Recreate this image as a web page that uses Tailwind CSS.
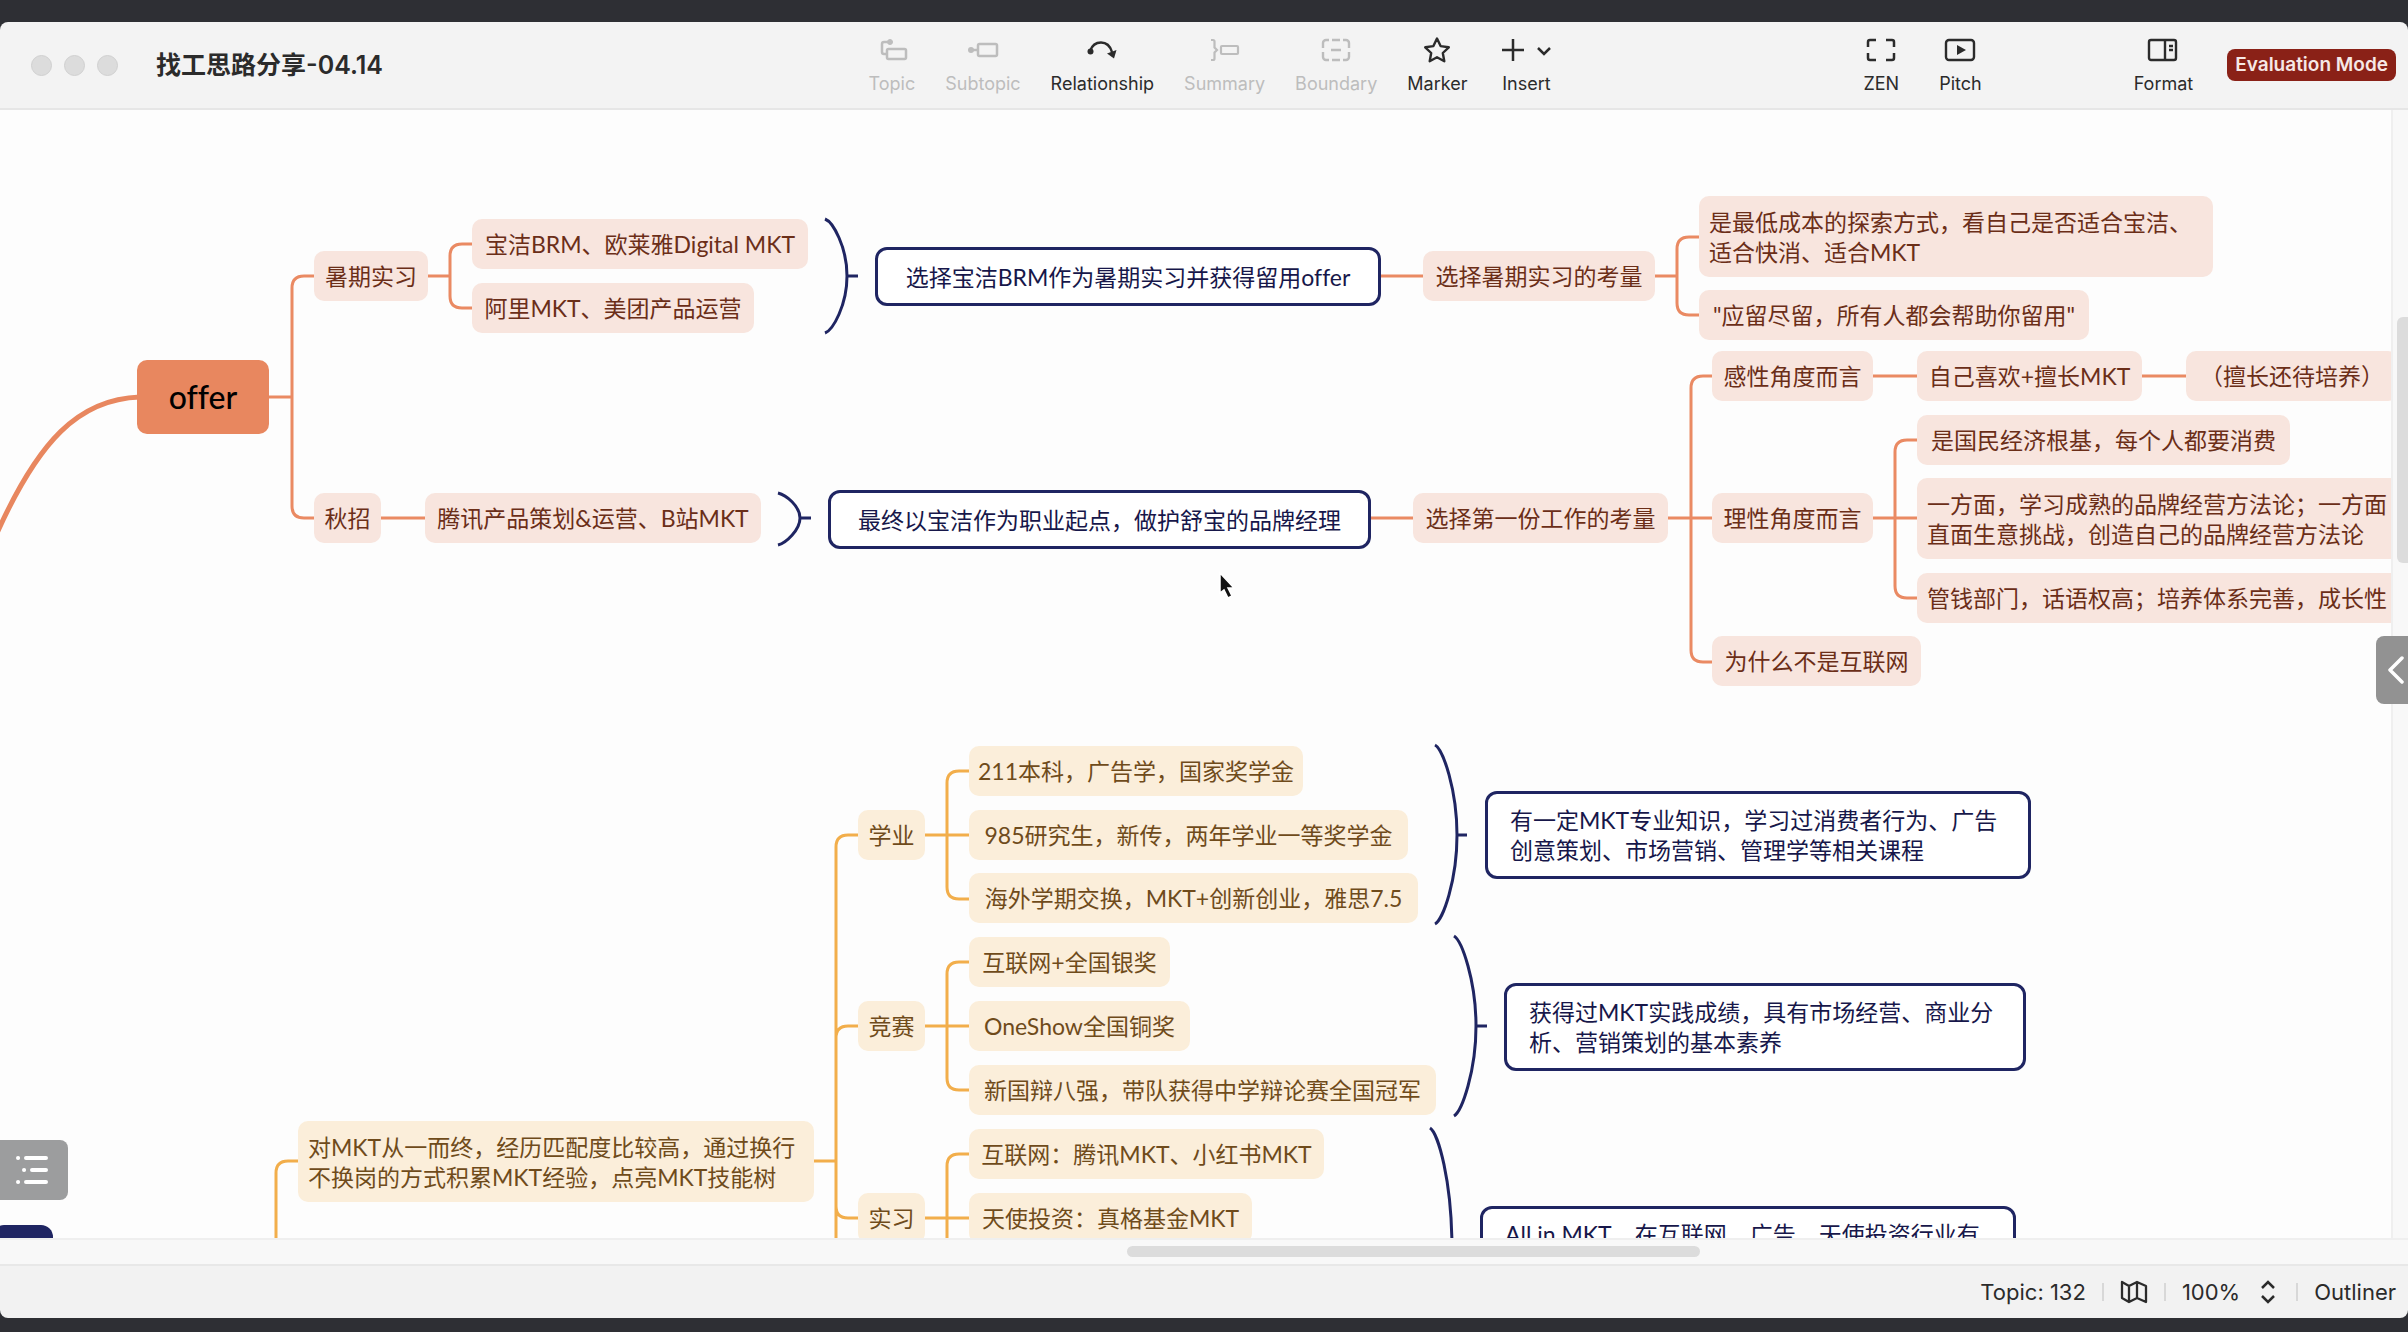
<!DOCTYPE html>
<html lang="zh-CN">
<head>
<meta charset="utf-8">
<title>找工思路分享-04.14</title>
<script src="https://cdn.jsdelivr.net/npm/@tailwindcss/browser@4"></script>
</head>
<body class="bg-[#2e2f34]">
<div class="flex h-screen flex-col pt-[22px] pb-[14px] font-['Inter','Noto_Sans_CJK_SC',sans-serif] text-[#2b2b2b]">

  <header class="grid h-[88px] shrink-0 grid-cols-[1fr_auto_1fr] items-center rounded-t-lg border-b-2 border-[#e6e6e6] bg-[#f3f3f3]">
    <div class="flex items-center pl-[31px]">
      <div class="flex gap-3">
        <span class="size-[21px] rounded-full border border-[#d0d0d0] bg-[#dcdcdc]"></span>
        <span class="size-[21px] rounded-full border border-[#d0d0d0] bg-[#dcdcdc]"></span>
        <span class="size-[21px] rounded-full border border-[#d0d0d0] bg-[#dcdcdc]"></span>
      </div>
      <h1 class="ml-[38px] text-[25px] leading-8 font-semibold whitespace-nowrap">找工思路分享-04.14</h1>
    </div>

    <nav class="ml-3 flex gap-[30px] text-[18px] leading-6">
      <button class="flex flex-col items-center gap-1.5 text-[#bdbdbd]" disabled>
        <svg class="size-8" viewBox="0 0 32 32" fill="none" stroke="currentColor" stroke-width="2.5"><path d="M14 8H8a2 2 0 0 0-2 2v8a2 2 0 0 0 2 2h3"/><rect x="11" y="15" width="19" height="10" rx="1.5"/><circle cx="14" cy="8" r="2.5" fill="currentColor" stroke-width="1"/></svg>
        <span>Topic</span>
      </button>
      <button class="flex flex-col items-center gap-1.5 text-[#bdbdbd]" disabled>
        <svg class="size-8" viewBox="0 0 32 32" fill="none" stroke="currentColor" stroke-width="2.5"><rect x="11" y="10" width="19" height="12" rx="1.5"/><path d="M4 16h7"/><circle cx="4" cy="16" r="3" fill="currentColor" stroke="none"/></svg>
        <span>Subtopic</span>
      </button>
      <button class="flex flex-col items-center gap-1.5">
        <svg class="size-8" viewBox="0 0 32 32" fill="none" stroke="currentColor" stroke-width="2.5"><path d="M4 17c4-11 18-12 22 1"/><circle cx="4.500" cy="17.500" r="3" fill="currentColor" stroke="none"/><path d="M21 19.500 30.500 16l-2.500 8.500z" fill="currentColor" stroke="none"/></svg>
        <span>Relationship</span>
      </button>
      <button class="flex flex-col items-center gap-1.5 text-[#bdbdbd]" disabled>
        <svg class="size-8" viewBox="0 0 32 32" fill="none" stroke="currentColor" stroke-width="2.200"><path d="M2 6h2a1.500 1.500 0 0 1 1.500 1.500v6L8 16l-2.500 2.500v6A1.500 1.500 0 0 1 4 26H2"/><rect x="12" y="12" width="17" height="8" rx="1"/></svg>
        <span>Summary</span>
      </button>
      <button class="flex flex-col items-center gap-1.5 text-[#bdbdbd]" disabled>
        <svg class="size-8" viewBox="0 0 32 32" fill="none" stroke="currentColor" stroke-width="2.400"><path d="M3 14V9a3 3 0 0 1 3-3h3M12 6h8M23 6h3a3 3 0 0 1 3 3v5M29 18v5a3 3 0 0 1-3 3h-3M20 26h-8M9 26H6a3 3 0 0 1-3-3v-5M11 16h10"/></svg>
        <span>Boundary</span>
      </button>
      <button class="flex flex-col items-center gap-1.5">
        <svg class="size-8" viewBox="0 0 32 32" fill="none" stroke="currentColor" stroke-width="2.400" stroke-linejoin="round"><path d="m16 4.500 3.600 7.600 8.200 1.200-6 5.700 1.500 8.200L16 23.300l-7.300 3.900L10.200 19l-6-5.700 8.200-1.200z"/></svg>
        <span>Marker</span>
      </button>
      <button class="flex flex-col items-center gap-1.5 pl-1">
        <svg class="h-8 w-[50px]" viewBox="0 0 50 32" fill="none" stroke="currentColor" stroke-width="2.500"><path d="M1 16h22M12 5v22M37 14l6 6 6-6"/></svg>
        <span>Insert</span>
      </button>
    </nav>

    <div class="flex items-center justify-end pr-3 text-[18px] leading-6">
      <button class="flex flex-col items-center gap-1.5">
        <svg class="size-8" viewBox="0 0 32 32" fill="none" stroke="currentColor" stroke-width="2.500"><path d="M3 13V8a2 2 0 0 1 2-2h6M21 6h6a2 2 0 0 1 2 2v5M29 19v5a2 2 0 0 1-2 2h-6M11 26H5a2 2 0 0 1-2-2v-5"/></svg>
        <span>ZEN</span>
      </button>
      <button class="ml-10 flex flex-col items-center gap-1.5">
        <svg class="size-8" viewBox="0 0 32 32" fill="none" stroke="currentColor" stroke-width="2.400"><rect x="2" y="6" width="28" height="20" rx="3"/><path d="m13 11 9 5-9 5z" fill="currentColor" stroke="none"/></svg>
        <span>Pitch</span>
      </button>
      <button class="ml-[152px] flex flex-col items-center gap-1.5">
        <svg class="size-8" viewBox="0 0 32 32" fill="none" stroke="currentColor" stroke-width="2.400"><rect x="2" y="6" width="27" height="20" rx="2"/><path d="M18 6v20M22 12h4M22 16h4"/></svg>
        <span>Format</span>
      </button>
      <button class="ml-[34px] h-8 rounded-lg bg-[#8a2117] px-2 text-[19px] font-semibold whitespace-nowrap text-[#f6e8e6]">Evaluation Mode</button>
    </div>
  </header>

  <main class="relative flex min-h-0 flex-1 bg-[#fdfdfd]">
    <section class="relative min-w-0 flex-1 overflow-hidden" aria-label="Mind map">
      <div class="absolute -top-[110px] left-0 h-[1332px] w-[2600px] font-['Lato','Noto_Sans_CJK_SC',sans-serif] text-[23px] leading-[30px] whitespace-nowrap [font-variant-ligatures:none]">
        <svg class="absolute inset-0" width="2600" height="1332" fill="none" stroke-width="3">
          <path stroke="#e8875f" stroke-width="5" d="M140 397C78 399 38 442-3 533"/>
          <g stroke="#ea8a63">
            <path d="M269 397h23M314 276h-10q-12 0-12 12v218q0 12 12 12h10"/>
            <path d="M427 276h23M472 244h-10q-12 0-12 12v40q0 12 12 12h10"/>
            <path d="M381 518h44M1381 276h42M1370 518h43"/>
            <path d="M1654 276h23M1699 237h-10q-12 0-12 12v54q0 12 12 12h10"/>
            <path d="M1668 518h44M1712 376h-9q-12 0-12 12v262q0 12 12 12h9"/>
            <path d="M1873 376h44M2142 376h44M1873 518h44M1917 440h-10q-12 0-12 12v134q0 12 12 12h10"/>
          </g>
          <g stroke="#f2ae4b">
            <path d="M298 1161h-10q-12 0-12 12v80M814 1161h22"/>
            <path d="M858 835h-10q-12 0-12 12v406M858 1026h-10q-12 0-12 12M858 1218h-10q-12 0-12-12"/>
            <path d="M925 835h44M969 771h-10q-12 0-12 12v104q0 12 12 12h10"/>
            <path d="M925 1026h44M969 962h-10q-12 0-12 12v104q0 12 12 12h10"/>
            <path d="M925 1218h44M969 1154h-10q-12 0-12 12v90"/>
          </g>
          <g stroke="#1f2562">
            <path d="M825 219C833 222 847 247 847 276S833 330 825 333M847 276h11"/>
            <path d="M778 493C786 495 800 506 800 518S786 543 778 545M800 518h11"/>
            <path d="M1435 745C1443 749 1457 790 1457 835S1443 920 1435 924M1457 835h10"/>
            <path d="M1454 936C1462 941 1476 981 1476 1026S1462 1111 1454 1116M1476 1026h11"/>
            <path d="M1430 1128C1438 1133 1452 1180 1452 1250"/>
          </g>
        </svg>

        <div class="absolute top-[360px] left-[137px] flex h-[74px] w-[132px] items-center justify-center rounded-[10px] bg-[#e8875f] text-[32px] font-medium text-black">offer</div>
        <div class="absolute top-[1225px] -left-2 h-[60px] w-[61px] rounded-xl bg-[#1f2562]"></div>

        <div class="text-[#6b2e18]">
          <div class="absolute top-[251px] left-[314px] flex h-[50px] w-[114px] items-center justify-center rounded-[10px] bg-[#f8e5de]">暑期实习</div>
          <div class="absolute top-[219px] left-[472px] flex h-[50px] w-[336px] items-center justify-center rounded-[10px] bg-[#f8e5de]">宝洁BRM、欧莱雅Digital MKT</div>
          <div class="absolute top-[283px] left-[472px] flex h-[50px] w-[282px] items-center justify-center rounded-[10px] bg-[#f8e5de]">阿里MKT、美团产品运营</div>
          <div class="absolute top-[493px] left-[314px] flex h-[50px] w-[67px] items-center justify-center rounded-[10px] bg-[#f8e5de]">秋招</div>
          <div class="absolute top-[493px] left-[425px] flex h-[50px] w-[336px] items-center justify-center rounded-[10px] bg-[#f8e5de]">腾讯产品策划&amp;运营、B站MKT</div>
          <div class="absolute top-[251px] left-[1423px] flex h-[50px] w-[232px] items-center justify-center rounded-[10px] bg-[#f8e5de]">选择暑期实习的考量</div>
          <div class="absolute top-[493px] left-[1413px] flex h-[50px] w-[255px] items-center justify-center rounded-[10px] bg-[#f8e5de]">选择第一份工作的考量</div>
          <div class="absolute top-[196px] left-[1699px] flex h-[81px] w-[514px] items-center rounded-[10px] bg-[#f8e5de] px-2.5">是最低成本的探索方式，看自己是否适合宝洁、<br>适合快消、适合MKT</div>
          <div class="absolute top-[290px] left-[1699px] flex h-[50px] w-[390px] items-center justify-center rounded-[10px] bg-[#f8e5de]">"应留尽留，所有人都会帮助你留用"</div>
          <div class="absolute top-[351px] left-[1712px] flex h-[50px] w-[161px] items-center justify-center rounded-[10px] bg-[#f8e5de]">感性角度而言</div>
          <div class="absolute top-[351px] left-[1917px] flex h-[50px] w-[225px] items-center justify-center rounded-[10px] bg-[#f8e5de]">自己喜欢+擅长MKT</div>
          <div class="absolute top-[351px] left-[2186px] flex h-[50px] w-[212px] items-center justify-center rounded-[10px] bg-[#f8e5de]">（擅长还待培养）</div>
          <div class="absolute top-[493px] left-[1712px] flex h-[50px] w-[161px] items-center justify-center rounded-[10px] bg-[#f8e5de]">理性角度而言</div>
          <div class="absolute top-[415px] left-[1917px] flex h-[50px] w-[373px] items-center justify-center rounded-[10px] bg-[#f8e5de]">是国民经济根基，每个人都要消费</div>
          <div class="absolute top-[478px] left-[1917px] flex h-[81px] w-[520px] items-center rounded-[10px] bg-[#f8e5de] px-2.5">一方面，学习成熟的品牌经营方法论；一方面<br>直面生意挑战，创造自己的品牌经营方法论</div>
          <div class="absolute top-[573px] left-[1917px] flex h-[50px] w-[520px] items-center rounded-[10px] bg-[#f8e5de] px-2.5">管钱部门，话语权高；培养体系完善，成长性</div>
          <div class="absolute top-[636px] left-[1712px] flex h-[50px] w-[209px] items-center justify-center rounded-[10px] bg-[#f8e5de]">为什么不是互联网</div>
        </div>

        <div class="text-[#6f4b1b]">
          <div class="absolute top-[1121px] left-[298px] flex h-[81px] w-[516px] items-center rounded-[10px] bg-[#fbeeda] px-2.5">对MKT从一而终，经历匹配度比较高，通过换行<br>不换岗的方式积累MKT经验，点亮MKT技能树</div>
          <div class="absolute top-[810px] left-[858px] flex h-[50px] w-[67px] items-center justify-center rounded-[10px] bg-[#fbeeda]">学业</div>
          <div class="absolute top-[746px] left-[969px] flex h-[50px] w-[334px] items-center justify-center rounded-[10px] bg-[#fbeeda]">211本科，广告学，国家奖学金</div>
          <div class="absolute top-[810px] left-[969px] flex h-[50px] w-[439px] items-center justify-center rounded-[10px] bg-[#fbeeda]">985研究生，新传，两年学业一等奖学金</div>
          <div class="absolute top-[873px] left-[969px] flex h-[50px] w-[449px] items-center justify-center rounded-[10px] bg-[#fbeeda]">海外学期交换，MKT+创新创业，雅思7.5</div>
          <div class="absolute top-[1001px] left-[858px] flex h-[50px] w-[67px] items-center justify-center rounded-[10px] bg-[#fbeeda]">竞赛</div>
          <div class="absolute top-[937px] left-[969px] flex h-[50px] w-[201px] items-center justify-center rounded-[10px] bg-[#fbeeda]">互联网+全国银奖</div>
          <div class="absolute top-[1001px] left-[969px] flex h-[50px] w-[221px] items-center justify-center rounded-[10px] bg-[#fbeeda]">OneShow全国铜奖</div>
          <div class="absolute top-[1065px] left-[969px] flex h-[50px] w-[467px] items-center justify-center rounded-[10px] bg-[#fbeeda]">新国辩八强，带队获得中学辩论赛全国冠军</div>
          <div class="absolute top-[1193px] left-[858px] flex h-[50px] w-[67px] items-center justify-center rounded-[10px] bg-[#fbeeda]">实习</div>
          <div class="absolute top-[1129px] left-[969px] flex h-[50px] w-[355px] items-center justify-center rounded-[10px] bg-[#fbeeda]">互联网：腾讯MKT、小红书MKT</div>
          <div class="absolute top-[1193px] left-[969px] flex h-[50px] w-[283px] items-center justify-center rounded-[10px] bg-[#fbeeda]">天使投资：真格基金MKT</div>
        </div>

        <div class="text-[#17174a]">
          <div class="absolute top-[247px] left-[875px] flex h-[59px] w-[506px] items-center justify-center rounded-xl border-3 border-[#1f2562] bg-white">选择宝洁BRM作为暑期实习并获得留用offer</div>
          <div class="absolute top-[490px] left-[828px] flex h-[59px] w-[543px] items-center justify-center rounded-xl border-3 border-[#1f2562] bg-white">最终以宝洁作为职业起点，做护舒宝的品牌经理</div>
          <div class="absolute top-[791px] left-[1485px] flex h-[88px] w-[546px] items-center rounded-xl border-3 border-[#1f2562] bg-white px-[22px]">有一定MKT专业知识，学习过消费者行为、广告<br>创意策划、市场营销、管理学等相关课程</div>
          <div class="absolute top-[983px] left-[1504px] flex h-[88px] w-[522px] items-center rounded-xl border-3 border-[#1f2562] bg-white px-[22px]">获得过MKT实践成绩，具有市场经营、商业分<br>析、营销策划的基本素养</div>
          <div class="absolute top-[1206px] left-[1480px] h-[88px] w-[536px] rounded-xl border-3 border-[#1f2562] bg-white px-[22px] py-2.5">All in MKT，在互联网、广告、天使投资行业有</div>
        </div>

        <svg class="absolute top-[570px] left-[1217px] h-8 w-5" viewBox="0 0 20 32"><path d="M3 3v20l4-3 4 8 4-2-4-8h6z" fill="#111" stroke="#fff" stroke-width="1.500"/></svg>
      </div>
    </section>

    <div class="w-[17px] shrink-0 border-l-2 border-[#efefef] bg-[#f8f8f8] pt-[207px] pl-1">
      <div class="h-[246px] rounded-l-md bg-[#dcdcdc]"></div>
    </div>

    <button class="absolute top-[1030px] left-0 flex h-[60px] w-[68px] items-center justify-center rounded-r-lg bg-[#9c9d9e]" aria-label="Outline">
      <svg class="h-8 w-9" viewBox="0 0 36 32" stroke="#fff" stroke-width="4" stroke-linecap="round" fill="none"><path d="M2 4h.1M10 4h20M8 16h.1M16 16h14M2 28h.1M10 28h20"/></svg>
    </button>
    <button class="absolute top-[526px] right-0 flex h-[68px] w-8 items-center justify-end rounded-l-lg bg-[#929292] pr-1" aria-label="Open panel">
      <svg class="h-7 w-4" viewBox="0 0 16 28" stroke="#fff" stroke-width="3.500" stroke-linecap="round" stroke-linejoin="round" fill="none"><path d="M14 2 2 14l12 12"/></svg>
    </button>
  </main>

  <div class="h-[26px] shrink-0 border-t-2 border-[#efefef] bg-[#f8f8f8] pt-1.5">
    <div class="ml-[46.8%] h-[11px] w-[23.8%] rounded-full bg-[#dcdcdc]"></div>
  </div>

  <footer class="flex h-[54px] shrink-0 items-center justify-end rounded-b-lg border-t-2 border-[#e8e8e8] bg-[#f2f2f2] pr-3 text-[22px] leading-7">
    <span>Topic: 132</span>
    <span class="mx-4 h-[18px] w-0.5 bg-[#d8d8d8]"></span>
    <button aria-label="Map"><svg class="h-6 w-7" viewBox="0 0 28 24" fill="none" stroke="currentColor" stroke-width="2.300" stroke-linejoin="round"><path d="M2 2l7 4 8-4 9 4v16l-9-4-8 4-7-4zM9 6v16M17 2v16"/></svg></button>
    <span class="mx-4 h-[18px] w-0.5 bg-[#d8d8d8]"></span>
    <button class="flex items-center gap-5"><span>100%</span>
      <svg class="h-6 w-4" viewBox="0 0 16 24" fill="none" stroke="currentColor" stroke-width="2.500"><path d="m2 8 6-6 6 6M2 16l6 6 6-6"/></svg></button>
    <span class="mr-4 ml-5 h-[18px] w-0.5 bg-[#d8d8d8]"></span>
    <button>Outliner</button>
  </footer>
</div>
</body>
</html>
